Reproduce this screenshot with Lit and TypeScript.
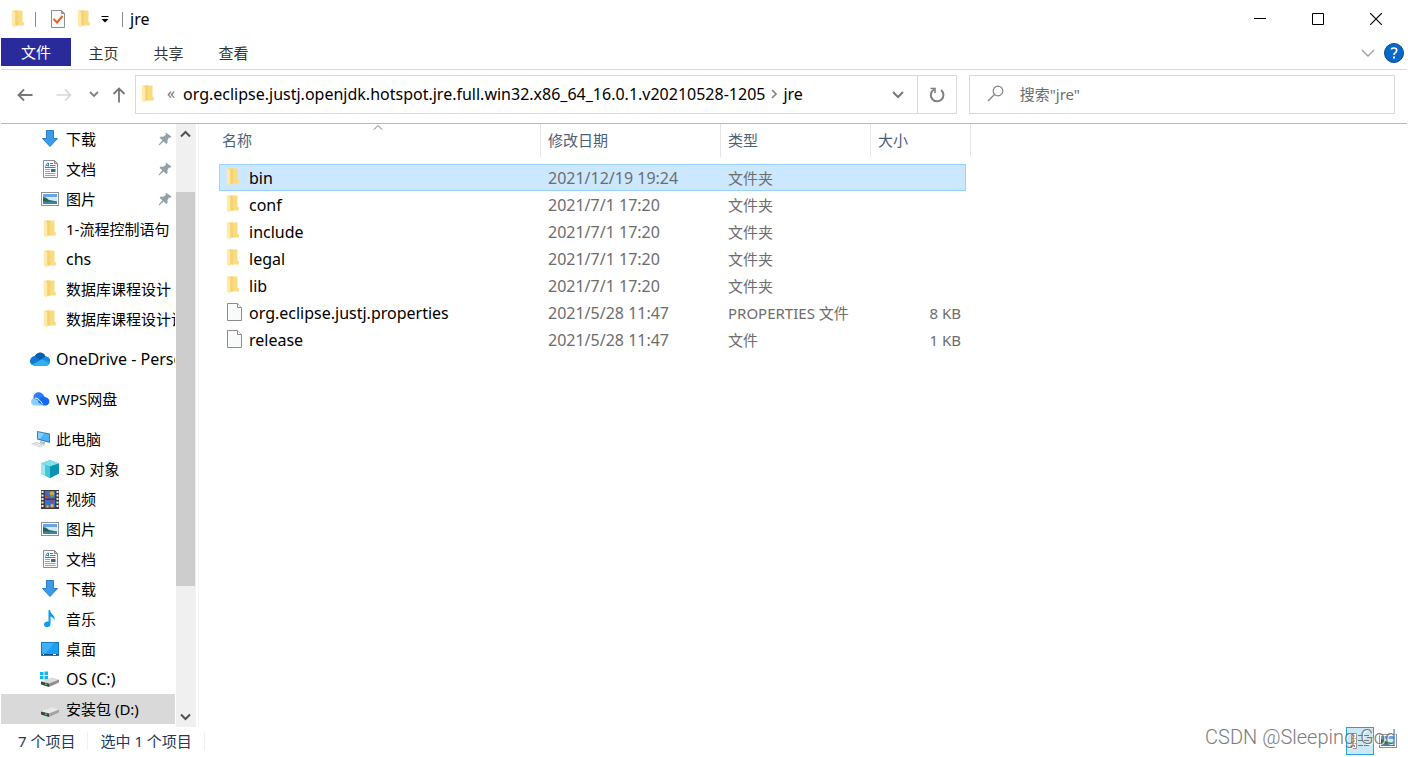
import { LitElement, html, css, svg, TemplateResult } from "lit";
import { customElement, property, state } from "lit/decorators.js";
import { classMap } from "lit/directives/class-map.js";
import { styleMap } from "lit/directives/style-map.js";

const folderIcon = html`<svg width="14" height="18" viewBox="0 0 14 18" aria-hidden="true">
  <path d="M1.500 0.500H11.500V12H12.800V15.600H3Z" fill="#fadc80" />
  <path d="M4 0.500H7V15.600H4Z" fill="#f5d273" />
  <path d="M0.800 0.500L4.200 2.400V17.800L0.800 15.800Z" fill="#feeaa9" />
</svg>`;

const blankIcon = html`<svg width="16" height="20" viewBox="0 0 16 20" aria-hidden="true">
  <path d="M1.500 1.500H11.500L15.500 5.500V18.500H1.500Z" fill="#f9fafa" stroke="#8c8c8c" />
  <path d="M11.500 1.500V5.500H15.500" fill="#fff" stroke="#8c8c8c" />
</svg>`;

const checkDocIcon = html`<svg width="16" height="20" viewBox="0 0 16 20" aria-hidden="true">
  <path d="M1.500 1.500H11.500L14.500 4.500V18.500H1.500Z" fill="#f7f8f9" stroke="#8e8e8e" />
  <path d="M11.500 1.500V4.500H14.500Z" fill="#aaa" stroke="#8e8e8e" />
  <path d="M3.500 10L7 13.500L12.500 7" fill="none" stroke="#f2601d" stroke-width="2" />
</svg>`;

const pinIcon = html`<svg width="14" height="14" viewBox="0 0 14 14" aria-hidden="true">
  <path d="M8.2 0.8L13.400 4.6L12 6L10.8 5.6L9.400 8.4L9.600 11L8.400 12L5.6 9.4L1.2 13.400L0.6 12.8L4.4 8.2L1.6 5.8L2.8 4.4L5.2 4.8L8.2 2.8L7.4 1.6Z" fill="#94a0a8" />
</svg>`;

const art: Record<string, TemplateResult> = {
  download: svg`<path d="M6.500 1.500H13.500V9.500H17.500L10 17.500L2.500 9.500H6.500Z" fill="#3c9be6" stroke="#2a7fc9"/>`,
  doc: svg`<path d="M3.500 1.500H14.500L17.500 4.500V18.500H3.500Z" fill="#fbfbfb" stroke="#8d8d8d"/>
    <path d="M14.500 1.500V4.500H17.500Z" fill="#c4c4c4" stroke="#8d8d8d"/>
    <path d="M5.500 7.500L7.500 4H8.500V7.500M6.500 6.500H8.500M10 4.500H13M10 6.500H15.500M5 8.500H15.500" stroke="#2c8bc6" fill="none"/>
    <path d="M5 10.500H10M5 12.500H10M5 14.500H15.500M5 16.500H15.500" stroke="#a2a2a2"/><rect x="11" y="10" width="4.500" height="3" fill="#386f8b"/>`,
  picture: svg`<rect x="1.500" y="3.500" width="17" height="13" fill="#fff" stroke="#8f9399"/>
    <rect x="3" y="5" width="14" height="4" fill="#66a5e6"/><rect x="3" y="8" width="14" height="4" fill="#cfe9f6"/>
    <path d="M3 8Q6 8 9 11L17 12.500V13H3Z" fill="#2b6250"/><rect x="3" y="12.500" width="14" height="2.500" fill="#3e83aa"/>`,
  cloud: svg`<path d="M0 13C-0.500 10 2 7 5 7C7 3 13 2 15.500 7.500C19 7.500 21 11 19.500 14C18.500 16.500 17 16.500 16 16.500H4.500C2.500 16.500 0.500 15.500 0 13Z" fill="#0f78d4"/>
    <path d="M5 7C7 2.500 13.500 2 15.500 7.500L10 11L5 7Z" fill="#0a5cad"/>
    <path d="M2 15.800L11 10.200L15.500 7.500C20 8 21 12 19.500 14C18.500 16.500 17 16.500 16 16.500H4.500Z" fill="#1490df"/>
    <path d="M2 15.800L12 10.500L19.500 14C18.500 16.500 17 16.500 16 16.500H4.500Z" fill="#2fb1ef"/>`,
  wps: svg`<path d="M1.500 14.500C0 11 3 8 6 9L13 16.500H4.500Q2.500 16.500 1.500 14.500Z" fill="#8ccdfd"/>
    <path d="M3.500 9C3 5 7.500 1.500 12 4.500C13.500 5.500 14 6.800 14.300 8L9 12Z" fill="#2c7bfa"/>
    <path d="M8 13C10 9 13 6 16 8.500C20.500 9 20.500 16 16 16.500H13Z" fill="#1867f2"/>
    <path d="M5 9Q9 9 12.800 15.500" fill="none" stroke="#fff"/>`,
  computer: svg`<path d="M7 2L20 4.500V14L7 10.500Z" fill="#3a83b8"/><path d="M8 3.300L19 5.500V12.600L8 9.600Z" fill="#4fb2f3"/>
    <path d="M8 3.300L14 4.500L10 10L8 9.600Z" fill="#86cffb"/><path d="M10 12L15 13V15.500L10 14.500Z" fill="#b9bcc0"/>
    <path d="M1 15L6 13L15 16L10 18.500Z" fill="#c9ccd0"/><path d="M3 15.200L11 17.500M5 14.300L13 16.500" stroke="#f0f0f0"/>`,
  cube: svg`<path d="M1 4.500L10 1L19 4.500V14.500L10 19L1 14.500Z" fill="#35b4cf"/><path d="M1 4.500L10 1L19 4.500L10 7.500Z" fill="#7fe0ea"/>
    <path d="M1 4.500L5 6V16.500L1 14.500Z" fill="#9be9ef"/><path d="M10 7.500L19 4.500V14.500L10 19Z" fill="#0b93b3"/>
    <path d="M5 6L10 7.500V19L5 16.500Z" fill="#47c5da"/>`,
  video: svg`<rect x="1" y="1" width="18" height="19" fill="#3c3c3c"/><path d="M2.500 2V19M17.500 2V19" stroke="#eee" stroke-width="2" stroke-dasharray="2 1.500"/>
    <rect x="5" y="2" width="10" height="7.500" fill="#3c6ed0"/><rect x="5" y="11" width="10" height="7.500" fill="#3c6ed0"/>
    <circle cx="12" cy="4.500" r="2.300" fill="#d8a92f"/><circle cx="12" cy="7" r="1.500" fill="#71a53a"/><circle cx="7" cy="8" r="1.500" fill="#c74139"/>
    <circle cx="12" cy="12" r="1.600" fill="#c5363a"/><circle cx="12" cy="16.800" r="1.700" fill="#dab83a"/><circle cx="7.500" cy="17.500" r="1.200" fill="#dab83a"/>`,
  music: svg`<path d="M8.500 1H10C10 5 15.500 6 14.500 11.500C14 9 12 8 10.500 7.500V15C10.500 19 4 19.500 4 15.500C4 13 6.500 12 8.500 12.500Z" fill="#0c9bf0"/>`,
  desktop: svg`<rect x="1.500" y="3.500" width="17" height="13" fill="#1e9ef5" stroke="#1277c5"/>
    <path d="M2 4H14L6 14H2Z" fill="#3db2ff"/><path d="M2 15.500H18" stroke="#0b4d85"/><path d="M3 15.500H17" stroke="#fff" stroke-dasharray="1 9 3 1"/>`,
  osdrive: svg`<path d="M0 3H3.500V6H0ZM4.500 2.500H8V6H4.500ZM0 7H3.500V10H0ZM4.500 7H8V10.500H4.500Z" fill="#10b5f1"/>
    <path d="M1 12.500L12 8.500L19 10.500L9 14.500Z" fill="#dcdcdc"/><path d="M1 12.500L9 14.500V18L1 15.500Z" fill="#3f4245"/>
    <path d="M9 14.500L19 10.500V13.500L9 18Z" fill="#8d8f91"/><rect x="5" y="14.500" width="2" height="1.500" fill="#51c45b"/>`,
  drive: svg`<path d="M1 12.500L12 8.500L19 10.500L9 14.500Z" fill="#e9e9e9"/><path d="M1 12.500L9 14.500V18L1 15.500Z" fill="#3f4245"/>
    <path d="M9 14.500L19 10.500V13.500L9 18Z" fill="#a2a4a6"/><rect x="5" y="14.500" width="2" height="1.500" fill="#51c45b"/>`,
};

interface NavItem { icon: string; label: string; root?: boolean; pinned?: boolean; current?: boolean; }

const navItems: NavItem[] = [
  { icon: "download", label: "下载", pinned: true },
  { icon: "doc", label: "文档", pinned: true },
  { icon: "picture", label: "图片", pinned: true },
  { icon: "folder", label: "1-流程控制语句" },
  { icon: "folder", label: "chs" },
  { icon: "folder", label: "数据库课程设计" },
  { icon: "folder", label: "数据库课程设计说明书" },
  { icon: "cloud", label: "OneDrive - Personal", root: true },
  { icon: "wps", label: "WPS网盘", root: true },
  { icon: "computer", label: "此电脑", root: true },
  { icon: "cube", label: "3D 对象" },
  { icon: "video", label: "视频" },
  { icon: "picture", label: "图片" },
  { icon: "doc", label: "文档" },
  { icon: "download", label: "下载" },
  { icon: "music", label: "音乐" },
  { icon: "desktop", label: "桌面" },
  { icon: "osdrive", label: "OS (C:)" },
  { icon: "drive", label: "安装包 (D:)", current: true },
];

interface FileRow { name: string; date: string; type: string; size: string; folder: boolean; }

const dir = (name: string, date: string): FileRow => ({ name, date, type: "文件夹", size: "", folder: true });

const files: FileRow[] = [
  dir("bin", "2021/12/19 19:24"),
  dir("conf", "2021/7/1 17:20"),
  dir("include", "2021/7/1 17:20"),
  dir("legal", "2021/7/1 17:20"),
  dir("lib", "2021/7/1 17:20"),
  { name: "org.eclipse.justj.properties", date: "2021/5/28 11:47", type: "PROPERTIES 文件", size: "8 KB", folder: false },
  { name: "release", date: "2021/5/28 11:47", type: "文件", size: "1 KB", folder: false },
];

// Latin-only strings are set one step larger than Chinese ones.
const isLatin = (text: string) => /^[\x00-\x7f]+$/.test(text);

const base = css`
  * { box-sizing: border-box; }
  svg { display: block; flex: none; }
  button { font: inherit; color: inherit; background: none; border: 0; padding: 0; margin: 0; display: flex; align-items: center; justify-content: center; }
  .latin { font-size: 16px; }
`;

@customElement("title-bar")
class TitleBar extends LitElement {
  static styles = [base, css`
    :host { display: flex; align-items: center; height: 38px; padding: 0 2px 0 10px; }
    .rule { width: 1px; height: 15px; background: #8a8a8a; }
    .quick { display: flex; align-items: center; height: 38px; }
    .quick .sys { width: 24px; justify-content: flex-start; }
    .check { width: 26px; margin-left: 9px; }
    .folder { width: 25px; }
    .more { width: 18px; }
    .rule.last { margin-left: 8px; }
    .title { margin: 0; padding-left: 7px; flex: 1; font-size: 16px; font-weight: 400; color: #000; }
    .win { display: flex; }
    .win button { width: 58px; height: 38px; }
  `];
  render() {
    return html`
      <div class="quick">
        <button class="sys" aria-label="系统菜单">${folderIcon}</button>
        <span class="rule"></span>
        <button class="check" aria-label="属性">${checkDocIcon}</button>
        <button class="folder" aria-label="新建文件夹">${folderIcon}</button>
        <button class="more" aria-label="自定义快速访问工具栏">
          <svg width="8" height="8" viewBox="0 0 8 8"><path d="M0.500 1.500H7.500" stroke="#000" /><path d="M0.500 4H7.500L4 7.500Z" /></svg>
        </button>
        <span class="rule last"></span>
      </div>
      <h1 class="title">jre</h1>
      <div class="win">
        <button aria-label="最小化"><svg width="12" height="12"><path d="M0 5.500H12" stroke="#000" /></svg></button>
        <button aria-label="最大化"><svg width="12" height="12"><path d="M0.500 0.500H11.500V11.500H0.500Z" fill="none" stroke="#000" /></svg></button>
        <button aria-label="关闭"><svg width="12" height="12"><path d="M0 0L12 12M12 0L0 12" stroke="#000" stroke-width="1.200" /></svg></button>
      </div>`;
  }
}

@customElement("ribbon-tabs")
class RibbonTabs extends LitElement {
  static styles = [base, css`
    :host { display: flex; justify-content: space-between; height: 32px; border-bottom: 1px solid #dadbdc; color: #333; }
    .tabs, .side { display: flex; }
    .tabs button { width: 65px; height: 30px; }
    .tabs .file { width: 70px; height: 28px; background: #2b2a9b; color: #fff; }
    .side { height: 30px; padding-right: 3px; }
    .expand { width: 32px; }
  `];
  render() {
    return html`
      <nav class="tabs">
        <button class="file">文件</button>
        <button>主页</button><button>共享</button><button>查看</button>
      </nav>
      <div class="side">
        <button class="expand" aria-label="展开功能区">
          <svg width="14" height="8"><path d="M1 1L7 7L13 1" fill="none" stroke="#a0a0a0" stroke-width="1.400" /></svg>
        </button>
        <button aria-label="帮助">
          <svg width="20" height="20" viewBox="0 0 20 20">
            <circle cx="10" cy="10" r="9.500" fill="#0669c9" stroke="#0a4c8c" />
            <path d="M7.300 6.500Q7.500 5 9.800 5Q12.700 5 12.700 7.300Q12.700 8.700 11.400 9.600Q10 10.500 10 12" fill="none" stroke="#fff" stroke-width="1.700" />
            <rect x="9" y="13.500" width="2" height="2" fill="#fff" />
          </svg>
        </button>
      </div>`;
  }
}

@customElement("address-row")
class AddressRow extends LitElement {
  static styles = [base, css`
    :host { display: flex; align-items: center; height: 54px; padding: 0 12px 4px 4px; border-bottom: 1px solid #b9b9b9; color: #000; }
    .back { width: 40px; height: 39px; }
    .fwd { width: 38px; height: 39px; }
    .recent { width: 22px; height: 39px; }
    .up { width: 28px; height: 39px; margin-right: 2px; }
    .address { flex: 2 1 0; min-width: 0; display: flex; height: 39px; border: 1px solid #d9d9d9; padding-left: 5px; }
    .crumbs { flex: 1; min-width: 0; display: flex; align-items: center; padding-bottom: 2px; }
    .crumbs button { white-space: nowrap; font-size: 16px; }
    .crumbs .chev { width: 24px; color: #777; padding-bottom: 2px; margin-left: 4px; }
    .sep { width: 18px; }
    .drop { width: 37px; }
    .refresh { width: 39px; border-left: 1px solid #d9d9d9; }
    .search { flex: 1 1 0; min-width: 0; display: flex; align-items: center; height: 39px; margin-left: 12px; border: 1px solid #d9d9d9; padding-left: 17px; padding-bottom: 2px; gap: 15px; }
    .search input { flex: 1; min-width: 0; font: inherit; border: 0; outline: 0; padding: 0; background: none; color: #000; }
    .search input::placeholder { color: #6d6d6d; opacity: 1; }
  `];
  render() {
    return html`
      <button class="back" aria-label="后退"><svg width="16" height="14"><path d="M15.500 7H1.500M7 1.500L1.500 7L7 12.500" fill="none" stroke="#777" stroke-width="1.800" /></svg></button>
      <button class="fwd" aria-label="前进"><svg width="16" height="14"><path d="M0.500 7H14.500M9 1.500L14.500 7L9 12.500" fill="none" stroke="#d6d6d6" stroke-width="1.600" /></svg></button>
      <button class="recent" aria-label="最近位置"><svg width="10" height="7"><path d="M1 1L5 5L9 1" fill="none" stroke="#808080" stroke-width="1.800" /></svg></button>
      <button class="up" aria-label="上移"><svg width="14" height="16"><path d="M7 15.500V1.500M1.500 7L7 1.500L12.500 7" fill="none" stroke="#777" stroke-width="1.800" /></svg></button>
      <div class="address">
        <div class="crumbs">
          ${folderIcon}
          <button class="chev" aria-label="上级文件夹">«</button>
          <button>org.eclipse.justj.openjdk.hotspot.jre.full.win32.x86_64_16.0.1.v20210528-1205</button>
          <button class="sep" aria-label="子文件夹"><svg width="7" height="10"><path d="M1 1L5 5L1 9" fill="none" stroke="#808080" stroke-width="1.600" /></svg></button>
          <button>jre</button>
        </div>
        <button class="drop" aria-label="以前的位置"><svg width="12" height="8"><path d="M1 1L6 6L11 1" fill="none" stroke="#777" stroke-width="2" /></svg></button>
        <button class="refresh" aria-label="刷新">
          <svg width="16" height="16" viewBox="0 0 16 16"><path d="M12 3A6.300 6.300 0 1 1 5 2.500" fill="none" stroke="#808080" stroke-width="2" /><path d="M1.500 1.500H6V6" fill="none" stroke="#808080" stroke-width="1.600" /></svg>
        </button>
      </div>
      <label class="search">
        <svg width="18" height="17" viewBox="0 0 18 17"><circle cx="11" cy="6" r="4.800" fill="none" stroke="#808080" stroke-width="1.200" /><path d="M7.500 9.500L1 16" stroke="#808080" stroke-width="1.300" /></svg>
        <input type="text" aria-label="搜索" placeholder='搜索"jre"' />
      </label>`;
  }
}

@customElement("nav-pane")
class NavPane extends LitElement {
  @property({ attribute: false }) items: NavItem[] = [];
  @property({ attribute: false }) scroll = { before: 48, thumb: 394, after: 121 };
  static styles = [base, css`
    :host { display: flex; width: 198px; min-height: 0; border-right: 1px solid #f3f3f3; color: #000; }
    .list { flex: 1; min-width: 0; overflow: hidden; margin: 0; padding: 0; list-style: none; }
    .root { padding: 10px 0 0; }
    .item { display: flex; width: 174px; height: 30px; align-items: center; padding-left: 39px; gap: 6px; color: inherit; text-decoration: none; white-space: nowrap; overflow: hidden; }
    .root .item { padding-left: 29px; }
    .item.current { background: #d9d9d9; }
    .icon { flex: none; width: 20px; display: flex; justify-content: center; }
    .label { flex: 1; min-width: 0; overflow: hidden; }
    .pin { padding-right: 3px; }
    .bar { flex: none; width: 20px; display: flex; flex-direction: column; background: #f0f0f0; margin-right: 2px; }
    .bar button { height: 20px; width: 19px; }
    .thumb { background: #cdcdcd; width: 19px; }
  `];
  private grow(n: number) {
    return styleMap({ flexGrow: String(n), flexBasis: "0" });
  }
  render() {
    return html`
      <ul class="list">
        ${this.items.map((i) => html`
          <li class=${classMap({ root: !!i.root })}>
            <a href="#" class=${classMap({ item: true, current: !!i.current })}>
              <span class="icon">${i.icon === "folder" ? folderIcon : html`<svg width="20" height="20" viewBox="0 0 20 20" aria-hidden="true">${art[i.icon]}</svg>`}</span>
              <span class=${classMap({ label: true, latin: isLatin(i.label) })}>${i.label}</span>
              ${i.pinned ? html`<span class="pin">${pinIcon}</span>` : ""}
            </a>
          </li>`)}
      </ul>
      <div class="bar">
        <button aria-label="向上滚动"><svg width="11" height="8"><path d="M1 6.500L5.500 2L10 6.500" fill="none" stroke="#505050" stroke-width="2" /></svg></button>
        <span style=${this.grow(this.scroll.before)}></span>
        <span class="thumb" style=${this.grow(this.scroll.thumb)}></span>
        <span style=${this.grow(this.scroll.after)}></span>
        <button aria-label="向下滚动"><svg width="11" height="8"><path d="M1 1.500L5.500 6L10 1.500" fill="none" stroke="#505050" stroke-width="2" /></svg></button>
      </div>`;
  }
}

@customElement("file-list")
class FileList extends LitElement {
  @property({ attribute: false }) rows: FileRow[] = [];
  @state() private selected = 0;
  static styles = [base, css`
    :host { display: block; flex: 1; min-width: 0; padding-left: 20px; overflow: hidden; }
    table { table-layout: fixed; width: 752px; border-spacing: 0; }
    .name { width: 322px; }
    .date { width: 180px; }
    .type { width: 150px; }
    .size { width: 100px; }
    th { position: relative; height: 33px; padding: 0 0 2px 7px; border-right: 1px solid #e5e5e5; font-weight: 400; text-align: left; color: #4c607a; }
    th:first-child { padding-left: 3px; }
    th button { height: 31px; }
    .sort { position: absolute; top: 0; left: 50%; margin-left: -7px; }
    .space td { height: 7px; padding: 0; }
    .row td { padding: 0; color: #6d6d6d; }
    .row td:first-child { color: #000; }
    .cell { display: flex; align-items: center; height: 27px; padding-left: 7px; white-space: nowrap; }
    td:last-child .cell { margin-right: 5px; padding-right: 5px; justify-content: flex-end; }
    .icon { width: 23px; padding-bottom: 2px; }
    .selected .cell { background: #cce8ff; border: 1px solid #99d1ff; border-width: 1px 0; }
    .selected td:first-child .cell { border-left-width: 1px; padding-left: 6px; }
    .selected td:last-child .cell { border-right-width: 1px; padding-right: 4px; }
  `];
  private cell(text: string, icon: TemplateResult | string = "") {
    return html`<td><div class=${classMap({ cell: true, latin: isLatin(text) })}>${icon}${text}</div></td>`;
  }
  render() {
    return html`
      <table>
        <thead>
          <tr>
            <th class="name" aria-sort="ascending"><button>名称</button>
              <svg class="sort" width="10" height="7"><path d="M1 5.500L5 1.500L9 5.500" fill="none" stroke="#777" /></svg></th>
            <th class="date"><button>修改日期</button></th>
            <th class="type"><button>类型</button></th>
            <th class="size"><button>大小</button></th>
          </tr>
        </thead>
        <tbody>
          <tr class="space"><td colspan="4"></td></tr>
          ${this.rows.map((r, i) => html`
            <tr class=${classMap({ row: true, selected: i === this.selected })} @click=${() => (this.selected = i)}>
              ${this.cell(r.name, html`<span class="icon">${r.folder ? folderIcon : blankIcon}</span>`)}
              ${this.cell(r.date)}
              ${this.cell(r.type)}
              <td><div class="cell">${r.size}</div></td>
            </tr>`)}
        </tbody>
      </table>`;
  }
}

@customElement("status-bar")
class StatusBar extends LitElement {
  static styles = [base, css`
    :host { display: flex; align-items: center; height: 30px; padding: 0 9px 2px 17px; color: #1e395b; }
    .count { padding-right: 12px; border-right: 1px solid #f0f0f0; line-height: 18px; }
    .count + .count { padding-left: 12px; }
    .views { display: flex; align-items: center; gap: 4px; margin-left: auto; }
    .details { width: 28px; height: 28px; background: #cbe8f6; border: 1px solid #26a0da; }
  `];
  render() {
    return html`
      <span class="count">7 个项目</span>
      <span class="count">选中 1 个项目</span>
      <div class="views">
        <button class="details" aria-label="详细信息">
          <svg width="18" height="16" viewBox="0 0 18 16">
            <path d="M0.500 0.500H5.500V15.500H0.500ZM0.500 5.500H5.500M0.500 10.500H5.500" fill="#fff" stroke="#999" />
            <path d="M2 3H4" stroke="#2f78b7" stroke-width="2" /><path d="M2 8H4" stroke="#c06030" stroke-width="2" /><path d="M2 13H4" stroke="#c22" stroke-width="2" />
            <path d="M7 2.500H18M7 7.500H18M7 12.500H18" stroke="#777" stroke-dasharray="5 1" />
          </svg>
        </button>
        <button aria-label="大图标"><svg width="20" height="20" viewBox="0 0 20 20">${art.picture}</svg></button>
      </div>`;
  }
}

@customElement("app-root")
class AppRoot extends LitElement {
  static styles = [base, css`
    :host { position: relative; display: flex; flex-direction: column; height: 100vh; padding: 0 1px; overflow: hidden; background: #fff; font: 15px/20px "Noto Sans", "Noto Sans CJK SC", sans-serif; }
    .main { flex: 1; min-height: 0; display: flex; }
    .mark { position: absolute; right: 12px; bottom: 8px; font: 300 20px/24px Roboto, "Liberation Sans", sans-serif; color: #666; opacity: 0.85; text-shadow: 1px 1px 0 #fff; pointer-events: none; }
  `];
  render() {
    return html`
      <title-bar></title-bar>
      <ribbon-tabs></ribbon-tabs>
      <address-row></address-row>
      <div class="main">
        <nav-pane .items=${navItems}></nav-pane>
        <file-list .rows=${files}></file-list>
      </div>
      <status-bar></status-bar>
      <span class="mark">CSDN @Sleeping God</span>`;
  }
}
